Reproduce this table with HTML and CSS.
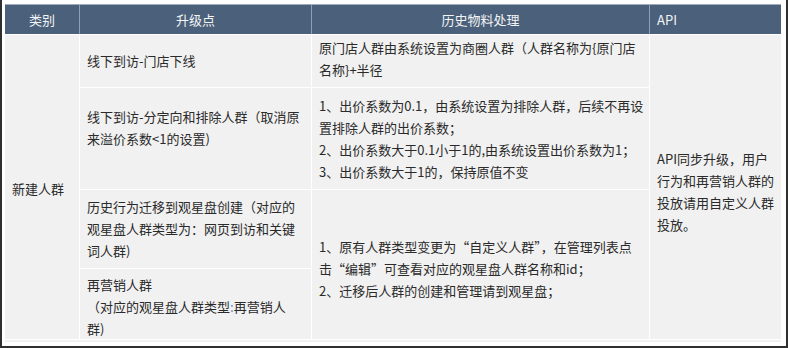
FILE: index.html
```html
<!DOCTYPE html>
<html lang="zh-CN">
<head>
<meta charset="utf-8">
<title>升级说明</title>
<link rel="stylesheet" href="styles.css">
</head>
<body>
<div class="frame">
  <div class="thead">
    <div class="th center">类别</div>
    <div class="th center">升级点</div>
    <div class="th center">历史物料处理</div>
    <div class="th">API</div>
  </div>
  <div class="tbody">
    <div class="td c-cat"><p class="txt">新建人群</p></div>
    <div class="td r1-c2"><p class="txt">线下到访-门店下线</p></div>
    <div class="td r1-c3"><p class="txt">原门店人群由系统设置为商圈人群（人群名称为{原门店<br>名称}+半径</p></div>
    <div class="td c-api"><p class="txt">API同步升级，用户<br>行为和再营销人群的<br>投放请用自定义人群<br>投放。</p></div>
    <div class="td r2-c2"><p class="txt">线下到访-分定向和排除人群（取消原<br>来溢价系数&lt;1的设置)<br>&nbsp;</p></div>
    <div class="td r2-c3"><p class="txt">1、出价系数为0.1，由系统设置为排除人群，后续不再设<br>置排除人群的出价系数；<br>2、出价系数大于0.1小于1的,由系统设置出价系数为1；<br>3、出价系数大于1的，保持原值不变</p></div>
    <div class="td r3-c2"><p class="txt">历史行为迁移到观星盘创建（对应的<br>观星盘人群类型为：网页到访和关键<br>词人群)</p></div>
    <div class="td r3-c3"><p class="txt">1、原有人群类型变更为“自定义人群”，在管理列表点<br>击“编辑”可查看对应的观星盘人群名称和id；<br>2、迁移后人群的创建和管理请到观星盘；</p></div>
    <div class="td r4-c2"><p class="txt">再营销人群<br>（对应的观星盘人群类型<span class="blue">:</span>再营销人<br>群)</p></div>
    <div class="td tail"></div>
  </div>
</div>
</body>
</html>
```

FILE: styles.css
```css
html, body {
  margin: 0;
  padding: 0;
  background: #ffffff;
}

.frame {
  width: 788px;
  height: 348px;
  box-sizing: border-box;
  border: 2px solid #2f2f2f;
  border-top: none;
  padding: 4px 5px 0 3px;
  background: #ffffff;
  overflow: hidden;
  font-family: "Noto Sans CJK SC", "Noto Sans", sans-serif;
  font-size: 13px;
  line-height: 22px;
  color: #2a2a2a;
}

.thead {
  display: grid;
  grid-template-columns: 74px 231px 337px 131px;
  column-gap: 1px;
  height: 30px;
  box-sizing: border-box;
  border-top: 1px solid #9eabb9;
  background: #8fa0b3;
}

.th {
  background: #4b607a;
  color: #f2f4f6;
  padding: 0 7px;
  display: flex;
  align-items: center;
}

.th.center {
  justify-content: center;
}

.tbody {
  display: grid;
  grid-template-columns: 74px 231px 337px 131px;
  grid-template-rows: 52px 101px 78px 70px 2px;
  gap: 1px;
  margin-top: 1px;
  background: #ffffff;
}

.td {
  background: #f1f1f1;
  padding: 0 7px;
  white-space: nowrap;
  display: flex;
  flex-direction: column;
  justify-content: center;
  overflow: hidden;
}

.txt {
  margin: 0;
}

.c-cat {
  grid-column: 1;
  grid-row: 1 / 5;
  padding-top: 3px;
}

.c-api {
  grid-column: 4;
  grid-row: 1 / 5;
  padding-top: 10px;
}

.r1-c2 { grid-column: 2; grid-row: 1; }
.r1-c3 { grid-column: 3; grid-row: 1; padding-bottom: 4px; }
.r2-c2 { grid-column: 2; grid-row: 2; }
.r2-c3 { grid-column: 3; grid-row: 2; }
.r3-c2 { grid-column: 2; grid-row: 3; }
.r3-c3 { grid-column: 3; grid-row: 3 / 5; padding-top: 8px; }
.r4-c2 {
  grid-column: 2;
  grid-row: 4;
  justify-content: flex-start;
  padding-top: 5px;
}

.tail {
  grid-column: 1 / 5;
  grid-row: 5;
}

.blue {
  color: #4d8fd6;
}
```
